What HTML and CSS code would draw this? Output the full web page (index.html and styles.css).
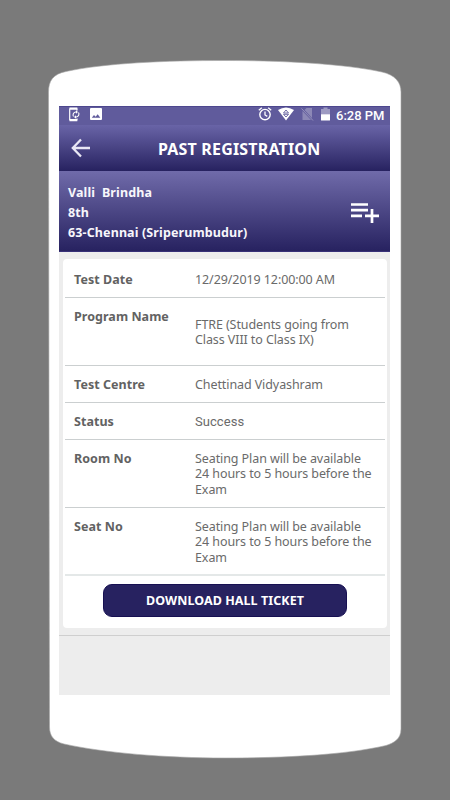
FILE: index.html
```html
<!DOCTYPE html>
<html lang="en">
<head>
<meta charset="utf-8">
<title>Past Registration</title>
<link rel="stylesheet" href="styles.css">
</head>
<body>
<div class="phone">
<svg class="shell" viewBox="0 0 450 800" aria-hidden="true"><path d="M48.500 92C48.500 81 53 74 66 71.500C105 63 165 60.500 225 60.500S345 64 382 72C395 75 401 82 401 92V729C401 739 394 743 386 745.500C345 755 285 758 225 758S105 753 64 744C54 741.500 49.500 736 49.500 727Z" fill="#fff" stroke="#a4a4a4" stroke-width=".6"/></svg>
<main class="screen">
  <div class="status">
    <svg class="sync" viewBox="0 0 12 15"><path d="M9 3.500V2.200H1.700V12.700H9V11.500" fill="none" stroke="#fff" stroke-width="1.200"/><path d="M1.500 1.300H9.300M1.500 13.500H9.300" stroke="#fff" stroke-width="1.500"/><path d="M5.500 9.500A3 3 0 0 1 7.500 5H8.500M10.500 5.500A3 3 0 0 1 8.500 10H7.500" fill="none" stroke="#fff" stroke-width="1.100"/><path d="M8 3.300L10 5L8 6.700ZM8 8.300L6 10L8 11.700Z" fill="#fff"/></svg>
    <svg class="image" viewBox="0 0 12 12"><path fill-rule="evenodd" fill="#fff" d="M1 0H11Q12 0 12 1V11Q12 12 11 12H1Q0 12 0 11V1Q0 0 1 0ZM1.800 9.700H10.300L7.700 6.200L5.600 8.700L4 7Z"/></svg>
    <span class="spacer"></span>
    <svg class="alarm" viewBox="0 0 14 14"><circle cx="7" cy="7.600" r="5.200" fill="none" stroke="#fff" stroke-width="1.400"/><path d="M.8 3.200L3.800.8M13.200 3.200L10.200.8M7 4.500V8L9.300 9.400" fill="none" stroke="#fff" stroke-width="1.300"/></svg>
    <svg class="wifi" viewBox="0 0 16 14"><path d="M0 3Q8-2 16 3L8 13.500Z" fill="#fff"/><path d="M8 3L10.500 6H5.500ZM8 10L5.500 7.300H10.500Z" fill="none" stroke="#605b9c" stroke-width=".9"/></svg>
    <svg class="nosim" viewBox="0 0 13 14"><path d="M5.500 1H11V11L3.500 3ZM1.500 4L10 13H1.500Z" fill="#8c88b6"/><path d="M.5 1.500L12 13.500" stroke="#9693bc" stroke-width="1"/></svg>
    <svg class="battery" viewBox="0 0 9 14"><path d="M2.500.5H6.500V2H9V7.500H0V2H2.500Z" fill="#9d9ac2"/><path d="M0 7.300H9V13Q9 13.500 8.500 13.500H.5Q0 13.500 0 13Z" fill="#fff"/></svg>
    <time>6:28 PM</time>
  </div>
  <header class="bar">
    <svg class="back" viewBox="0 0 20 20"><path d="M19 10H2M10 1.500L1.800 10L10 18.500" fill="none" stroke="#e9e7f5" stroke-width="2.300"/></svg>
    <h1>PAST REGISTRATION</h1>
  </header>
  <section class="profile">
    <div class="person"><p>Valli&nbsp; Brindha</p><p>8th</p><p>63-Chennai (Sriperumbudur)</p></div>
    <svg class="add" viewBox="0 0 30 22"><path d="M1 2.500H18M1 8.200H18M1 13.800H12M15 13.800H29M22 7V21" stroke="#fff" stroke-width="2.700"/></svg>
  </section>
  <section class="content">
    <div class="card">
      <dl>
        <div class="row first"><dt>Test Date</dt><dd>12/29/2019 12:00:00 AM</dd></div>
        <div class="row tall program"><dt>Program Name</dt><dd>FTRE (Students going from<br>Class VIII to Class IX)</dd></div>
        <div class="row"><dt>Test Centre</dt><dd>Chettinad Vidyashram</dd></div>
        <div class="row"><dt>Status</dt><dd class="success">Success</dd></div>
        <div class="row tall"><dt>Room No</dt><dd>Seating Plan will be available<br>24 hours to 5 hours before the<br>Exam</dd></div>
        <div class="row tall last"><dt>Seat No</dt><dd>Seating Plan will be available<br>24 hours to 5 hours before the<br>Exam</dd></div>
      </dl>
      <button>DOWNLOAD HALL TICKET</button>
    </div>
  </section>
</main>
</div>
</body>
</html>
```
FILE: styles.css
```css
* { box-sizing: border-box; }
body { margin: 0; background: #7a7a7a; font-family: "Noto Sans", sans-serif; }
h1, p, dl, dt, dd { margin: 0; }
svg { display: block; flex: none; }
.phone { width: 450px; height: 800px; display: grid; overflow: hidden; }
.shell, .screen { grid-area: 1 / 1; }
.shell { width: 450px; height: 800px; }
.screen { position: relative; width: 331px; height: 589px; margin: 106px 0 0 59px; background: #ededed; white-space: nowrap; }
.status { height: 19px; display: flex; align-items: flex-start; padding: 0 4px 0 9px; background: #605b9c; border-top: 1px solid #4d478e; }
.sync { width: 12px; height: 15px; }
.image { width: 12px; height: 12px; margin: 1px 0 0 10px; }
.spacer { flex: 1; }
.alarm { width: 14px; height: 14px; }
.wifi { width: 16px; height: 14px; margin-left: 6px; }
.nosim { width: 13px; height: 14px; margin-left: 7px; }
.battery { width: 9px; height: 14px; margin: 0 6px 0 7px; }
time { color: #fff; font: 500 13px/17px Roboto, sans-serif; width: 50px; }
.bar { height: 46px; display: flex; align-items: center; padding-left: 12px; background: linear-gradient(#6964a7, #272260); }
.back { width: 20px; height: 20px; }
h1 { margin: 2px 0 0 67px; color: #fff; font-size: 16px; line-height: 22px; letter-spacing: 0.18px; }
.profile { height: 81px; display: flex; justify-content: space-between; padding: 12px 10px 0 9px; background: linear-gradient(#706baa, #272260); border-bottom: 1px solid #383178; }
.person { color: #f7f6fb; font-size: 12.5px; font-weight: 700; line-height: 20px; letter-spacing: 0.12px; }
.add { width: 30px; height: 22px; margin-top: 19px; }
.content { height: 384px; padding: 7px 3px 0 4px; border-bottom: 1px solid #cfcfcf; }
.card { height: 369px; background: #fff; border-radius: 4px; padding: 0 2px; }
.row { height: 37px; display: flex; padding: 11px 0 0 9px; border-bottom: 1px solid #cbcfd0; color: #6a6a6a; font-size: 12.5px; line-height: 15.4px; }
.row.first { height: 39px; padding-top: 13px; }
.row.tall { height: 68px; }
.row.last { border-bottom: 2px solid #e4e8e8; }
dt { width: 121px; color: #626262; font-weight: 700; letter-spacing: 0.04px; }
dd { letter-spacing: -0.09px; }
.program dd { padding-top: 8px; }
.success { font-family: Roboto, sans-serif; font-size: 13px; letter-spacing: 0.05px; }
button { display: block; width: 244px; height: 33px; margin: 8px 0 0 38px; padding: 0; border: 1px solid #171052; border-radius: 9px; background: #272260; color: #fff; font: 700 12.5px/31px "Noto Sans", sans-serif; letter-spacing: 0.07px; }
```
